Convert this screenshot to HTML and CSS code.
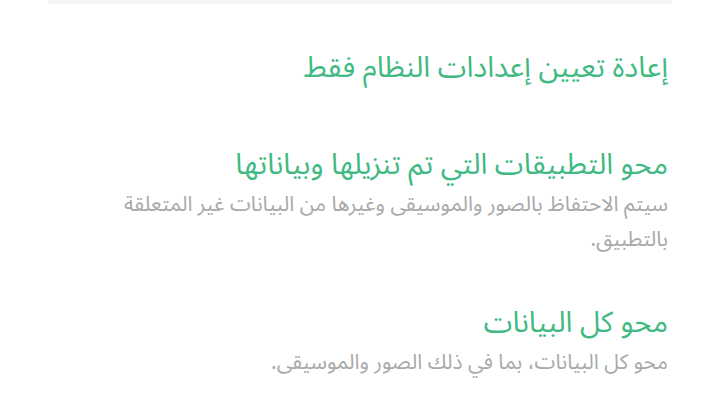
FILE: index.html
```html
<!DOCTYPE html>
<html lang="ar" dir="rtl">
<head>
<meta charset="utf-8">
<link rel="stylesheet" href="styles.css">
</head>
<body>
<div class="divider"></div>
<ul class="options">
  <li class="option first">
    <div class="title">إعادة تعيين إعدادات النظام فقط</div>
  </li>
  <li class="option">
    <div class="title">محو التطبيقات التي تم تنزيلها وبياناتها</div>
    <div class="desc">سيتم الاحتفاظ بالصور والموسيقى وغيرها من البيانات غير المتعلقة بالتطبيق.</div>
  </li>
  <li class="option">
    <div class="title">محو كل البيانات</div>
    <div class="desc">محو كل البيانات، بما في ذلك الصور والموسيقى.</div>
  </li>
</ul>
</body>
</html>
```
FILE: styles.css
```css
html, body {
  margin: 0;
  padding: 0;
  background: #ffffff;
}
body {
  width: 720px;
  height: 405px;
  overflow: hidden;
  font-family: "Noto Sans Arabic", "Noto Naskh Arabic", "DejaVu Sans", sans-serif;
}
.divider {
  height: 4px;
  margin: 0 48px;
  background: #f4f4f4;
}
.options {
  list-style: none;
  margin: 0;
  padding: 0 52px 0 100px;
}
.option {
  padding: 22px 0;
}
.option.first {
  padding: 42px 0 31px;
}
.title {
  color: #40b982;
  font-size: 29px;
  line-height: 44px;
}
.desc {
  color: #a9a9a9;
  font-size: 21px;
  line-height: 35px;
}
```
